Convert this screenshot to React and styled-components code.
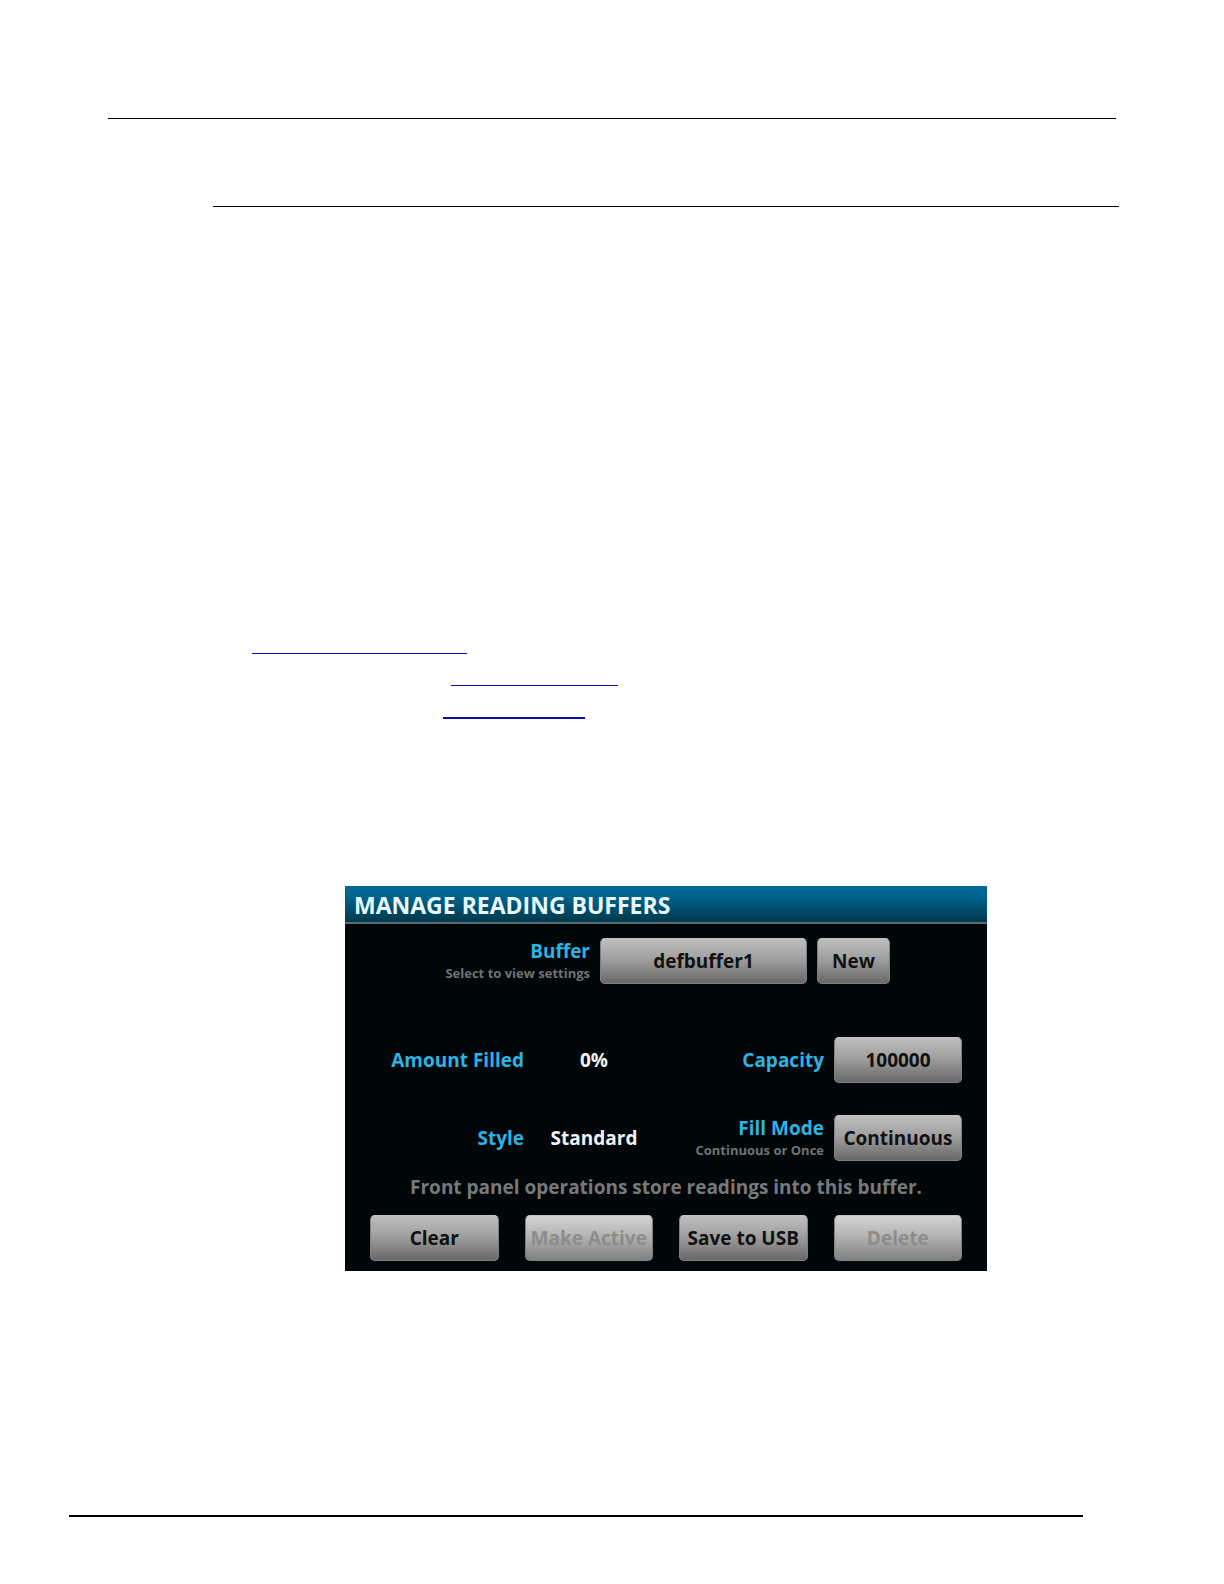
import styled, { createGlobalStyle } from 'styled-components';
import React from 'react';

const GlobalStyle = createGlobalStyle`
  * {
    box-sizing: border-box;
  }
  body {
    margin: 0;
    background-color: #ffffff;
    font-family: "Open Sans", "Noto Sans", sans-serif;
  }
`;
const Page = styled.div`
  min-height: 100vh;
  padding: 118px 141px 67px 69px;
  display: flex;
  flex-direction: column;
`;
const Rule = styled.hr`
  width: auto;
  height: ${(props) => props.$thick ? '2px' : '1px'};
  margin: 0;
  border: none;
  background-color: #000000;
`;
const HeaderRule = styled(Rule)`
  margin: 0 -33px 0 39px;
`;
const SectionRule = styled(Rule)`
  margin: 87px -36px 0 144px;
`;
const FooterRule = styled(Rule)`
  margin-top: auto;
`;
const LinkList = styled.ul`
  margin: 414px 0 0;
  padding: 0;
  list-style: none;
`;
const LinkItem = styled.li`
  height: 32px;
  padding-left: ${(props) => props.$indent}px;
  display: flex;
`;
const Link = styled.a`
  width: ${(props) => props.$width}px;
  height: ${(props) => props.$thick ? '34px' : '33px'};
  border-bottom: ${(props) => props.$thick ? '2px' : '1px'} solid #0b0bab;
`;
const Panel = styled.section`
  margin: 169px 96px 0 276px;
  background-color: #010709;
`;
const Title = styled.h1`
  height: 38px;
  margin: 0;
  padding-left: 9px;
  border-bottom: 2px solid #586a78;
  font-size: 23px;
  line-height: 38px;
  white-space: nowrap;
  color: #e8f8ff;
  background-image: linear-gradient(#006a9a, #00638d 30%, #00384a);
`;
const Content = styled.div`
  padding: 14px 25px 10px;
  display: flex;
  flex-direction: column;
`;
const BufferRow = styled.div`
  display: grid;
  grid-template-columns: 220fr 207fr 73fr 62fr;
  column-gap: 10px;
  align-items: center;
`;
const Settings = styled.div`
  margin-top: 53px;
  display: grid;
  grid-template-columns: 154fr 120fr 160fr 128fr;
  gap: 32px 10px;
  align-items: center;
`;
const Label = styled.label`
  display: flex;
  flex-direction: column;
  align-items: flex-end;
  font-size: 19px;
  line-height: 24px;
  font-weight: 700;
  white-space: nowrap;
  color: #2bb4e4;
`;
const Hint = styled.span`
  font-size: 13px;
  line-height: 20px;
  color: #707375;
`;
const Value = styled.output`
  font-size: 19px;
  line-height: 24px;
  font-weight: 700;
  text-align: center;
  color: #f2f2f2;
`;
const Note = styled.p`
  margin: 14px 0 16px;
  font-size: 19px;
  line-height: 24px;
  font-weight: 700;
  text-align: center;
  white-space: nowrap;
  color: #77797b;
`;
const Actions = styled.div`
  display: grid;
  grid-template-columns: repeat(4, 1fr);
  column-gap: 26px;
`;
const Button = styled.button`
  min-width: 0;
  height: 46px;
  padding: 0;
  border: 1px solid #808080;
  border-top-color: #c4c4c4;
  border-radius: 5px;
  font-family: inherit;
  font-size: 19px;
  line-height: 24px;
  font-weight: 700;
  white-space: nowrap;
  color: #111111;
  background-image: linear-gradient(#bebebe, #a0a0a0 45%, #686868);

  &:disabled {
    color: #8c8c8c;
    background-image: linear-gradient(#d2d2d2, #b4b4b4 45%, #808080);
  }
`;

const links = [
  { name: 'Creating buffers', href: '#creating', indent: 183, width: 215 },
  { name: 'Remote commands', href: '#remote', indent: 382, width: 167 },
  { name: 'Buffer reference', href: '#reference', indent: 374, width: 142, thick: true },
];

function App() {
  return (
    <Page>
      <GlobalStyle />
      <HeaderRule />
      <SectionRule />
      <LinkList>
        {links.map((link) => (
          <LinkItem key={link.href} $indent={link.indent}>
            <Link href={link.href} aria-label={link.name} $width={link.width} $thick={link.thick} />
          </LinkItem>
        ))}
      </LinkList>
      <Panel>
        <Title>MANAGE READING BUFFERS</Title>
        <Content>
          <BufferRow>
            <Label htmlFor="buffer">
              Buffer
              <Hint>Select to view settings</Hint>
            </Label>
            <Button id="buffer" type="button">defbuffer1</Button>
            <Button type="button">New</Button>
          </BufferRow>
          <Settings>
            <Label htmlFor="filled">Amount Filled</Label>
            <Value id="filled">0%</Value>
            <Label htmlFor="capacity">Capacity</Label>
            <Button id="capacity" type="button">100000</Button>
            <Label htmlFor="style">Style</Label>
            <Value id="style">Standard</Value>
            <Label htmlFor="fill-mode">
              Fill Mode
              <Hint>Continuous or Once</Hint>
            </Label>
            <Button id="fill-mode" type="button">Continuous</Button>
          </Settings>
          <Note>Front panel operations store readings into this buffer.</Note>
          <Actions>
            <Button type="button">Clear</Button>
            <Button type="button" disabled>Make Active</Button>
            <Button type="button">Save to USB</Button>
            <Button type="button" disabled>Delete</Button>
          </Actions>
        </Content>
      </Panel>
      <FooterRule $thick />
    </Page>
  );
}

export default App;
